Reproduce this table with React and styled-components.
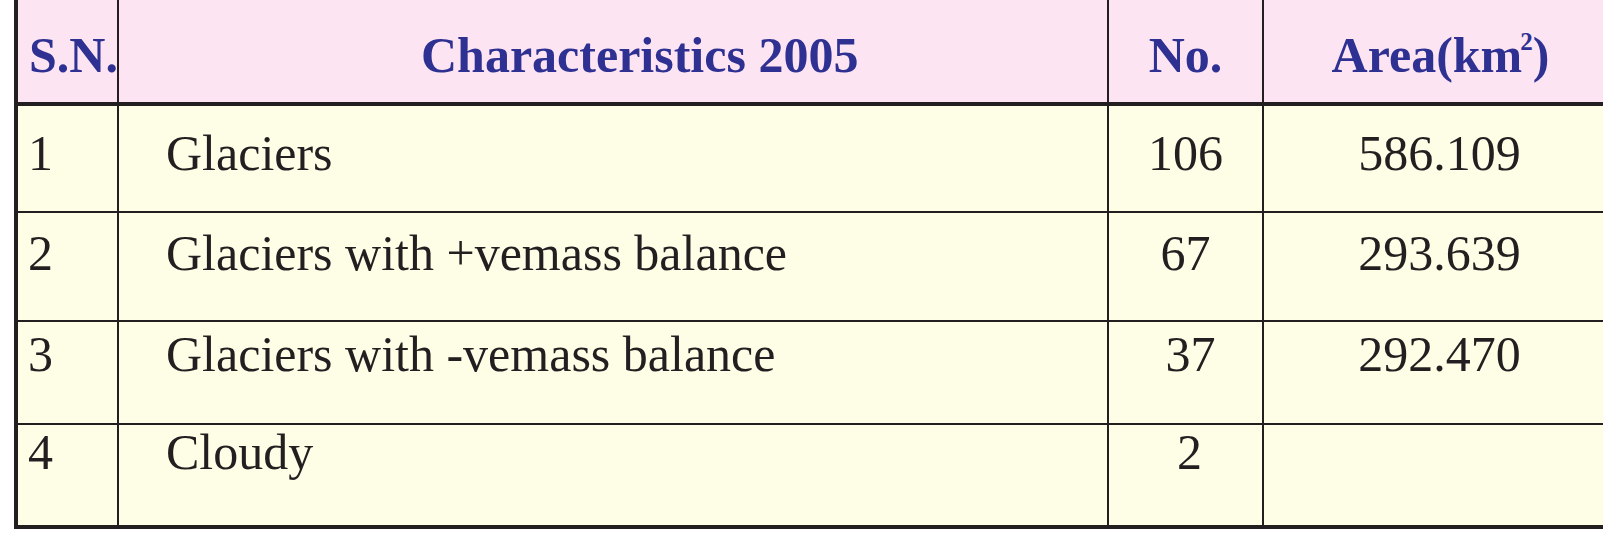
import React from "react";
import styled, { createGlobalStyle } from "styled-components";

const Global = createGlobalStyle`
  html, body {
    margin: 0;
    padding: 0;
    background: #ffffff;
    overflow: hidden;
  }
`;

const INK = "#231f20";

const Table = styled.div`
  margin-left: 14px;
  width: calc(100% - 14px);
  border-left: 4px solid ${INK};
  border-bottom: 4px solid ${INK};
  box-sizing: border-box;
  font-family: "Liberation Serif", "Times New Roman", serif;
  font-size: 50px;
  line-height: 50px;
`;

const Row = styled.div`
  display: grid;
  grid-template-columns: 101px 990px 155px 1fr;
  height: ${(p) => p.$h}px;
  box-sizing: border-box;
  background: ${(p) => (p.$head ? "#fce4f3" : "#fefde6")};
  border-bottom: ${(p) => p.$line}px solid ${INK};
  color: ${(p) => (p.$head ? "#2e3192" : INK)};
  font-weight: ${(p) => (p.$head ? 700 : 400)};
`;

const Cell = styled.div`
  box-sizing: border-box;
  padding-top: ${(p) => p.$top}px;
  padding-left: ${(p) => p.$left || 0}px;
  text-align: ${(p) => p.$align || "left"};
  border-right: ${(p) => (p.$last ? "none" : `2px solid ${INK}`)};
  white-space: nowrap;
`;

const Sup = styled.sup`
  font-size: 0.5em;
  line-height: 0;
  vertical-align: 0.9em;
  margin-left: -2px;
`;

const rows = [
  { sn: "1", name: "Glaciers", no: "106", area: "586.109", h: 107, line: 2, top: 22, shift: 0 },
  { sn: "2", name: "Glaciers with +vemass balance", no: "67", area: "293.639", h: 109, line: 2, top: 15, shift: 0 },
  { sn: "3", name: "Glaciers with -vemass balance", no: "37", area: "292.470", h: 103, line: 2, top: 7, shift: 10 },
  { sn: "4", name: "Cloudy", no: "2", area: "", h: 100, line: 0, top: 2, shift: 8 },
];

export default function App() {
  return (
    <>
      <Global />
      <Table>
        <Row $head $h={106} $line={4}>
          <Cell $top={30} $left={11}>S.N.</Cell>
          <Cell $top={30} $left={302}>Characteristics 2005</Cell>
          <Cell $top={30} $align="center">No.</Cell>
          <Cell $top={30} $align="center" $left={14} $last>
            Area(km<Sup>2</Sup>)
          </Cell>
        </Row>
        {rows.map((r) => (
          <Row key={r.sn} $h={r.h} $line={r.line}>
            <Cell $top={r.top} $left={10}>{r.sn}</Cell>
            <Cell $top={r.top} $left={47}>{r.name}</Cell>
            <Cell $top={r.top} $align="center" $left={r.shift}>{r.no}</Cell>
            <Cell $top={r.top} $align="center" $left={12} $last>{r.area}</Cell>
          </Row>
        ))}
      </Table>
    </>
  );
}
